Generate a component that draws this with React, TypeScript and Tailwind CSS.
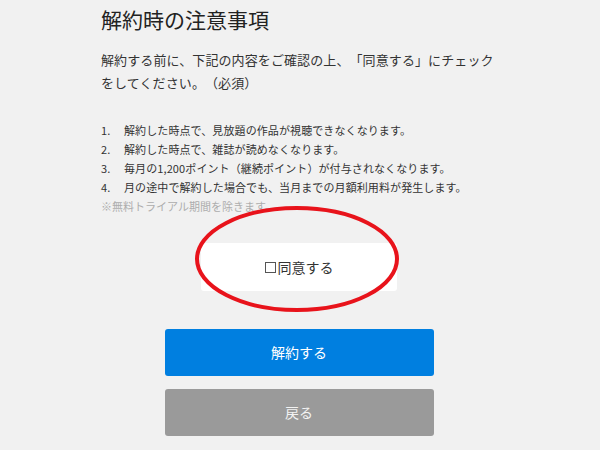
import React from 'react';

const items = [
  '解約した時点で、見放題の作品が視聴できなくなります。',
  '解約した時点で、雑誌が読めなくなります。',
  '毎月の1,200ポイント（継続ポイント）が付与されなくなります。',
  '月の途中で解約した場合でも、当月までの月額利用料が発生します。',
];

export default function App() {
  return (
    <div
      className="w-[600px] h-[450px] overflow-hidden bg-[#f1f1f1] text-[#333333] [text-spacing-trim:space-all]"
      style={{ fontFamily: '"Noto Sans CJK JP", "DejaVu Sans", sans-serif' }}
    >
      <div className="ml-[101px] w-[396px] pt-[3px]">
        {/* heading */}
        <h1 className="text-[21px] leading-[32px] text-[#222222]">解約時の注意事項</h1>

        {/* lead text */}
        <p className="mt-[13px] text-[13px] leading-[23px] tracking-[0.1px]">
          解約する前に、下記の内容をご確認の上、「同意する」にチェックをしてください。（必須）
        </p>

        {/* notice list */}
        <ol className="mt-[27px] text-[11px] leading-[19px] tracking-[0.1px]">
          {items.map((t, i) => (
            <li key={i} className="flex">
              <span className="w-[23px] shrink-0">{i + 1}.</span>
              <span>{t}</span>
            </li>
          ))}
        </ol>
        <p className="text-[11px] leading-[19px] text-[#adadad]">※無料トライアル期間を除きます。</p>

        {/* agree checkbox */}
        <div className="relative mx-auto mt-[27px] w-[196px]">
          <label className="flex h-[48px] items-center justify-center rounded-[3px] bg-white text-[14px]">
            <span className="mr-[2px] inline-block h-[11px] w-[11px] border border-[#555555]" />
            同意する
          </label>
          <svg
            className="pointer-events-none absolute left-[-8px] top-[-38px]"
            width="208"
            height="108"
            viewBox="0 0 208 108"
          >
            <ellipse cx="104" cy="54" rx="100" ry="51" fill="none" stroke="#e8131b" strokeWidth="4" />
          </svg>
        </div>

        {/* buttons */}
        <div className="mx-auto mt-[38px] flex w-[269px] flex-col gap-[13px]">
          <button className="h-[47px] rounded-[3px] bg-[#007fe0] text-[14px] text-white">解約する</button>
          <button className="h-[47px] rounded-[3px] bg-[#9a9a9a] text-[14px] text-[#f2f2f2]">戻る</button>
        </div>
      </div>
    </div>
  );
}
